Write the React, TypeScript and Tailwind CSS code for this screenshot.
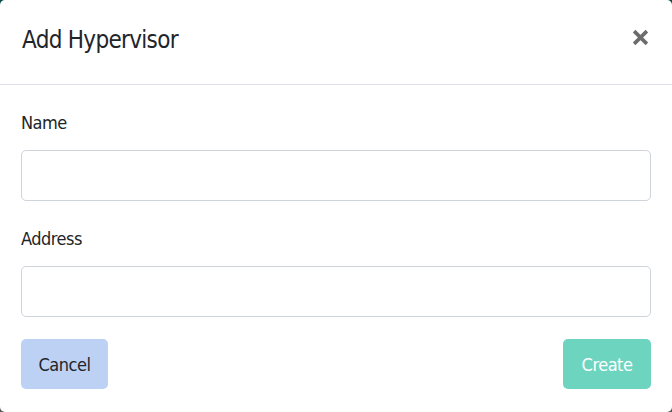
import React from "react";

export default function App() {
  const font = { fontFamily: '"DejaVu Sans Condensed", "DejaVu Sans", sans-serif', fontStretch: "condensed" as const };
  return (
    <div className="w-[672px] h-[412px] bg-[linear-gradient(to_bottom,#0d4d47,#555555)]" style={font}>
      <div className="w-[672px] h-[412px] bg-white rounded-[5px] flex flex-col">
        <div className="h-[85px] border-b border-[#dee2e6] flex items-center justify-between pl-[22px] pr-[23px]">
          <h1 className="text-[24px] tracking-[-0.7px] text-[#212529] leading-none -mt-[4px]">Add Hypervisor</h1>
          <button className="text-[#6c6c6c] w-[17px] h-[17px] flex items-center justify-center -mt-[10px]">
            <svg width="17" height="17" viewBox="0 0 16 16">
              <path d="M2 2 L14 14 M14 2 L2 14" stroke="currentColor" strokeWidth="3.4" strokeLinecap="butt" />
            </svg>
          </button>
        </div>
        <div className="px-[21px] pt-[27px] flex flex-col">
          <label className="text-[18px] tracking-[-0.5px] text-[#212529] leading-[24px] -mt-[1px] mb-[1px]">Name</label>
          <input className="mt-[14px] h-[51px] border border-[#ced4da] rounded-[5px] px-3 outline-none" />
          <label className="mt-[26px] mb-[1px] text-[18px] tracking-[-0.5px] text-[#212529] leading-[24px]">Address</label>
          <input className="mt-[14px] h-[51px] border border-[#ced4da] rounded-[5px] px-3 outline-none" />
          <div className="mt-[22px] flex justify-between">
            <button className="w-[87px] h-[50px] rounded-[5px] bg-[#bdd1f5] text-[#212529] text-[18px] tracking-[-0.5px]">Cancel</button>
            <button className="w-[88px] h-[50px] rounded-[5px] bg-[#6dd5bf] text-white text-[18px] tracking-[-0.5px]">Create</button>
          </div>
        </div>
      </div>
    </div>
  );
}
